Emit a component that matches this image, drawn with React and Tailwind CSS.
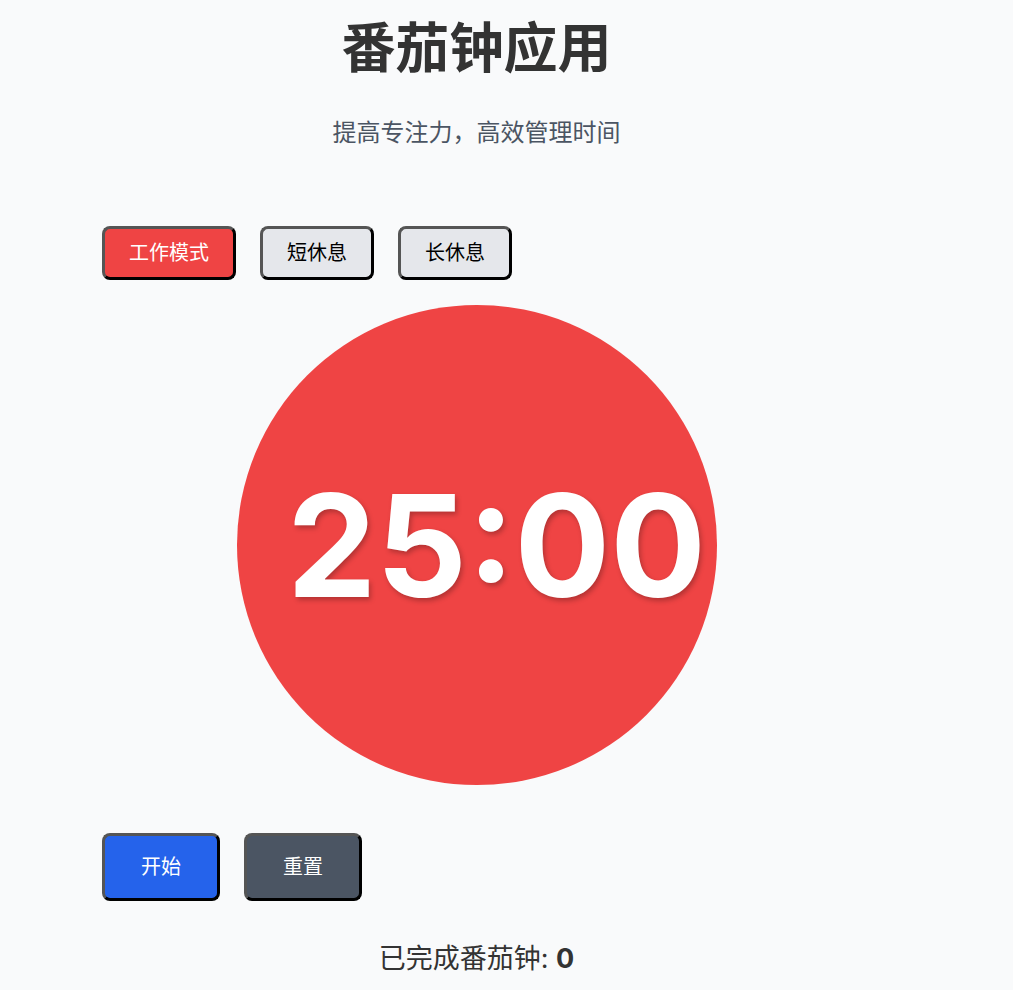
import React, { useState } from "react";

export default function App() {
  const [mode, setMode] = useState("work");
  const modes = [
    { id: "work", label: "工作模式" },
    { id: "short", label: "短休息" },
    { id: "long", label: "长休息" },
  ];
  const font = { fontFamily: '"Inter", "Noto Sans CJK SC", sans-serif' };
  return (
    <div className="min-h-[990px] w-full bg-[#f9fafb]" style={font}>
      <div className="w-[953px] px-[102px] flex flex-col">
        <h1 className="mt-[21px] text-center text-[54px] leading-[56px] font-bold text-[#333333]">
          番茄钟应用
        </h1>
        <p className="mt-[40px] text-center text-2xl leading-8 text-[#4b5563]">
          提高专注力，高效管理时间
        </p>
        <div className="mt-[77px] flex gap-6">
          {modes.map((m) => (
            <button
              key={m.id}
              onClick={() => setMode(m.id)}
              className={
                "rounded-lg border-[3px] border-t-[#555555] border-l-[#555555] border-b-black border-r-black px-6 py-2.5 text-xl leading-7 " +
                (mode === m.id ? "bg-[#ef4444] text-white" : "bg-[#e5e7eb] text-black")
              }
            >
              {m.label}
            </button>
          ))}
        </div>
        <div className="mt-[25px] flex justify-center">
          <div className="flex h-[480px] w-[480px] items-center justify-center rounded-full bg-[#ef4444]">
            <span className="ml-[40px] text-[142px] leading-none font-bold text-white [text-shadow:2px_3px_5px_rgba(0,0,0,0.25)]">
              25:00
            </span>
          </div>
        </div>
        <div className="mt-[48px] flex gap-6">
          <button className="rounded-lg border-[3px] border-t-[#555555] border-l-[#555555] border-b-black border-r-black bg-[#2563eb] px-9 py-[17px] text-xl leading-7 text-white">
            开始
          </button>
          <button className="rounded-lg border-[3px] border-t-[#555555] border-l-[#555555] border-b-black border-r-black bg-[#4b5563] px-9 py-[17px] text-xl leading-7 text-white">
            重置
          </button>
        </div>
        <p className="mt-[42px] text-center text-[27px] leading-8 text-[#333333]">
          已完成番茄钟: <span className="font-bold">0</span>
        </p>
      </div>
    </div>
  );
}
